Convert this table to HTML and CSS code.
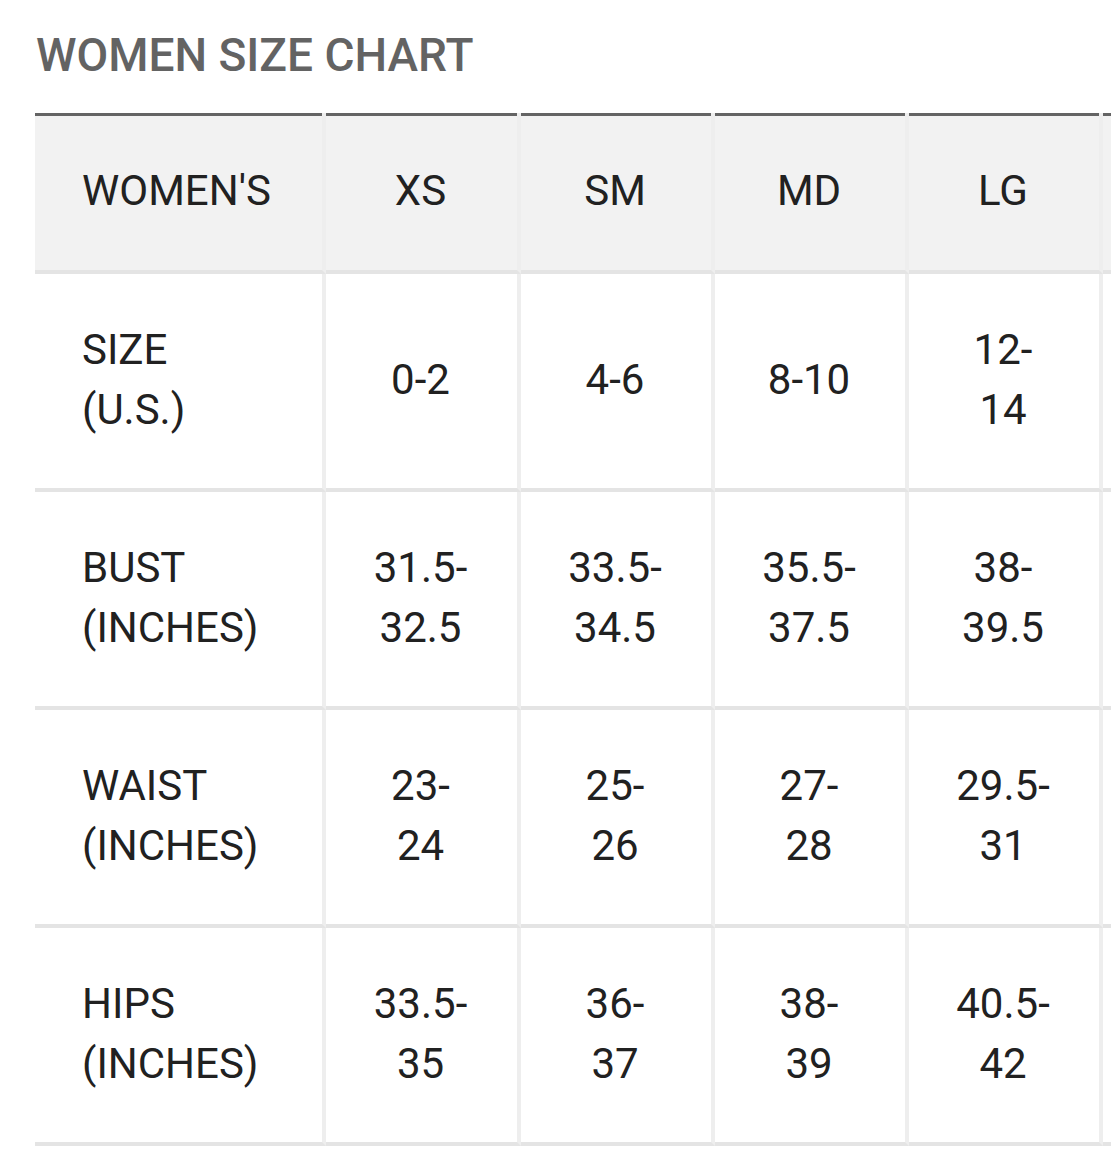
FILE: index.html
```html
<!DOCTYPE html>
<html lang="en">
<head>
<meta charset="utf-8">
<title>Women Size Chart</title>
<link rel="stylesheet" href="styles.css">
</head>
<body>
<main class="page">
  <h1 class="title">WOMEN SIZE CHART</h1>
  <div class="table-wrap">
    <table class="chart">
      <thead>
        <tr>
          <th class="label col-first">WOMEN'S</th>
          <th class="col-a">XS</th>
          <th class="col">SM</th>
          <th class="col">MD</th>
          <th class="col">LG</th>
          <th class="col">XL</th>
        </tr>
      </thead>
      <tbody>
        <tr>
          <td class="label">SIZE (U.S.)</td>
          <td>0-2</td>
          <td>4-6</td>
          <td>8-10</td>
          <td>12-14</td>
          <td>16-18</td>
        </tr>
        <tr>
          <td class="label">BUST (INCHES)</td>
          <td>31.5-32.5</td>
          <td>33.5-34.5</td>
          <td>35.5-37.5</td>
          <td>38-39.5</td>
          <td>41-42.5</td>
        </tr>
        <tr>
          <td class="label">WAIST (INCHES)</td>
          <td>23-24</td>
          <td>25-26</td>
          <td>27-28</td>
          <td>29.5-31</td>
          <td>32.5-34</td>
        </tr>
        <tr>
          <td class="label">HIPS (INCHES)</td>
          <td>33.5-35</td>
          <td>36-37</td>
          <td>38-39</td>
          <td>40.5-42</td>
          <td>43.5-45</td>
        </tr>
      </tbody>
    </table>
  </div>
</main>
</body>
</html>
```

FILE: styles.css
```css
html, body {
  margin: 0;
  padding: 0;
  background: #ffffff;
}

body {
  font-family: Roboto, "Liberation Sans", Arial, sans-serif;
  color: #212121;
}

.page {
  padding-left: 35px;
  overflow: hidden;
}

.title {
  margin: 19px 0 22px 1px;
  font-size: 46px;
  line-height: 72px;
  font-weight: 500;
  color: #636363;
  letter-spacing: 0;
}

.table-wrap {
  width: 1076px;
  overflow: hidden;
}

.chart {
  border-collapse: separate;
  border-spacing: 0;
  table-layout: fixed;
  width: 1262px;
  font-size: 42px;
  line-height: 60px;
}

.chart th,
.chart td {
  box-sizing: border-box;
  padding: 46px 47px 48px 47px;
  text-align: center;
  vertical-align: middle;
  font-weight: 400;
  color: #212121;
  border-right: 4px solid #eeeeee;
  border-bottom: 4px solid #e4e4e4;
}

.chart td:not(.label) {
  padding-left: 46px;
  padding-right: 48px;
}

.chart th {
  background: #f2f2f2;
  padding-top: 48px;
  padding-bottom: 49px;
  box-shadow: inset 0 3px 0 #646464;
}

.chart th:not(.label) {
  padding-left: 46px;
  padding-right: 48px;
}

.chart .label {
  text-align: left;
}

.col-first {
  width: 291px;
}

.col-a {
  width: 195px;
}

.col {
  width: 194px;
}
```
